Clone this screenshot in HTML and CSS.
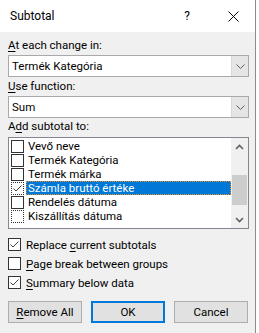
FILE: index.html
```html
<!DOCTYPE html>
<html lang="en">
<head>
    <meta charset="UTF-8">
    <title>Subtotal</title>
    <link rel="stylesheet" href="styles.css">
</head>
<body>
    <div class="dialog">
        <div class="titlebar">
            <span class="title">Subtotal</span>
            <span class="help">?</span>
            <svg class="close" width="11" height="11" viewBox="0 0 11 11">
                <path d="M0.5 0.5L10.5 10.5M10.5 0.5L0.5 10.5" stroke="#000" stroke-width="1" fill="none"/>
            </svg>
        </div>
        <div class="content">
            <div class="field-label label-first"><u>A</u>t each change in:</div>
            <div class="combo">
                <span class="combo-value">Termék Kategória</span>
                <span class="combo-btn">
                    <svg width="9" height="5" viewBox="0 0 9 5"><path d="M0.5 0.5L4.5 4.5L8.5 0.5" stroke="#606060" fill="none"/></svg>
                </span>
            </div>
            <div class="field-label"><u>U</u>se function:</div>
            <div class="combo">
                <span class="combo-value">Sum</span>
                <span class="combo-btn">
                    <svg width="9" height="5" viewBox="0 0 9 5"><path d="M0.5 0.5L4.5 4.5L8.5 0.5" stroke="#606060" fill="none"/></svg>
                </span>
            </div>
            <div class="field-label label-list">A<u>d</u>d subtotal to:</div>
            <div class="listbox">
                <div class="list-items">
                    <div class="list-row"><span class="check"></span><span class="row-text">Vevő neve</span></div>
                    <div class="list-row"><span class="check"></span><span class="row-text">Termék Kategória</span></div>
                    <div class="list-row"><span class="check"></span><span class="row-text">Termék márka</span></div>
                    <div class="list-row selected">
                        <span class="check focus">
                            <svg width="11" height="11" viewBox="0 0 11 11"><path d="M1.5 5.5L4 8L9.5 2.5" stroke="#444" fill="none"/></svg>
                        </span>
                        <span class="row-text">Számla bruttó értéke</span>
                    </div>
                    <div class="list-row"><span class="check"></span><span class="row-text">Rendelés dátuma</span></div>
                    <div class="list-row"><span class="check focus"></span><span class="row-text">Kiszállítás dátuma</span></div>
                </div>
                <div class="scrollbar">
                    <span class="scroll-arrow">
                        <svg width="9" height="6" viewBox="0 0 9 6"><path d="M1 5L4.5 1.5L8 5" stroke="#606060" stroke-width="1.6" fill="none"/></svg>
                    </span>
                    <span class="track"><span class="thumb"></span></span>
                    <span class="scroll-arrow">
                        <svg width="9" height="6" viewBox="0 0 9 6"><path d="M1 1L4.5 4.5L8 1" stroke="#606060" stroke-width="1.6" fill="none"/></svg>
                    </span>
                </div>
            </div>
            <div class="options">
                <div class="option">
                    <span class="check">
                        <svg width="11" height="11" viewBox="0 0 11 11"><path d="M1.5 5.5L4 8L9.5 2.5" stroke="#444" fill="none"/></svg>
                    </span>
                    <span>Replace <u>c</u>urrent subtotals</span>
                </div>
                <div class="option">
                    <span class="check"></span>
                    <span><u>P</u>age break between groups</span>
                </div>
                <div class="option">
                    <span class="check">
                        <svg width="11" height="11" viewBox="0 0 11 11"><path d="M1.5 5.5L4 8L9.5 2.5" stroke="#444" fill="none"/></svg>
                    </span>
                    <span><u>S</u>ummary below data</span>
                </div>
            </div>
            <div class="buttons">
                <button class="btn"><u>R</u>emove All</button>
                <button class="btn btn-default">OK</button>
                <button class="btn">Cancel</button>
            </div>
        </div>
    </div>
</body>
</html>
```

FILE: styles.css
```css
body {
    margin: 0;
    background-color: #ffffff;
    font-family: Roboto, 'Liberation Sans', sans-serif;
    font-size: 11.5px;
    color: #000000;
}
u {
    text-decoration-thickness: 1px;
    text-underline-offset: 2px;
}
.dialog {
    width: 255px;
    height: 333px;
    border-right: 1px solid #8c8c8c;
    background-color: #f0f0f0;
    display: flex;
    flex-direction: column;
}
.titlebar {
    height: 32px;
    flex-shrink: 0;
    background-color: #ffffff;
    display: flex;
    align-items: center;
    padding-left: 10px;
    font-size: 12px;
}
.title {
    flex: 1;
}
.help {
    margin-right: 38px;
}
.close {
    margin-right: 16px;
}
.content {
    flex: 1;
    display: flex;
    flex-direction: column;
    padding: 6px 6px 0 8px;
}
.field-label {
    line-height: 15px;
    margin-top: 2px;
}
.label-first {
    margin-top: 0;
}
.label-list {
    margin-top: 1px;
}
.combo {
    height: 22px;
    box-sizing: border-box;
    border: 1px solid #a9a9a9;
    background-color: #ffffff;
    display: flex;
    margin-top: 2px;
}
.combo-value {
    flex: 1;
    line-height: 20px;
    padding-left: 3px;
}
.combo-btn {
    width: 16px;
    background-color: #e5e5e5;
    border-left: 1px solid #d9d9d9;
    display: flex;
    align-items: center;
    justify-content: center;
}
.listbox {
    height: 92px;
    box-sizing: border-box;
    margin-top: 3px;
    border: 1px solid #828790;
    background-color: #ffffff;
    display: flex;
}
.list-items {
    flex: 1;
    padding: 1px 0 0 2px;
    overflow: hidden;
}
.list-row {
    height: 14px;
    display: flex;
    align-items: center;
}
.check {
    width: 13px;
    height: 13px;
    box-sizing: border-box;
    border: 1px solid #333333;
    background-color: #ffffff;
    display: flex;
    align-items: center;
    justify-content: center;
    flex-shrink: 0;
}
.check.focus {
    border-style: dotted;
}
.row-text {
    flex: 1;
    height: 14px;
    line-height: 14px;
    margin-left: 2px;
    padding-left: 2px;
    box-sizing: border-box;
}
.selected .row-text {
    background-color: #0078d7;
    color: #ffffff;
    outline: 1px dotted #f08a24;
    outline-offset: -1px;
}
.scrollbar {
    width: 17px;
    background-color: #f0f0f0;
    display: flex;
    flex-direction: column;
}
.scroll-arrow {
    height: 17px;
    display: flex;
    align-items: center;
    justify-content: center;
}
.track {
    flex: 1;
    padding-top: 20px;
}
.thumb {
    display: block;
    height: 30px;
    margin: 0 1px;
    background-color: #cdcdcd;
}
.options {
    margin-top: 6px;
}
.option {
    height: 19px;
    display: flex;
    align-items: center;
    gap: 5px;
}
.buttons {
    display: flex;
    gap: 9px;
    margin-top: 9px;
}
.btn {
    width: 74px;
    height: 22px;
    box-sizing: border-box;
    background-color: #e1e1e1;
    border: 1px solid #adadad;
    font-family: Roboto, 'Liberation Sans', sans-serif;
    font-size: 11.5px;
    color: #000000;
    padding: 0;
}
.btn-default {
    border: 2px solid #0078d7;
}
```
